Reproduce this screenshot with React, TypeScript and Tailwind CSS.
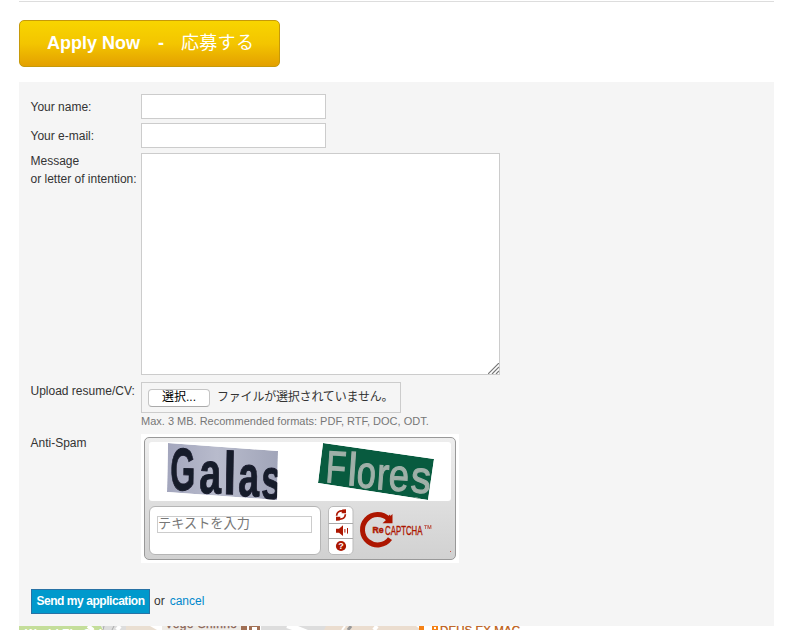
import React from 'react';

const field = 'border border-[#ccc] bg-white outline-none block';

type Glyph = { ch: string; x: number; y: number; size: number; w: number };

const galas: Glyph[] = [
  { ch: 'G', x: 170, y: 490, size: 60, w: 25 },
  { ch: 'a', x: 199, y: 493, size: 59, w: 22 },
  { ch: 'l', x: 223, y: 494, size: 60, w: 13 },
  { ch: 'a', x: 238, y: 496, size: 58, w: 21 },
  { ch: 's', x: 261, y: 499, size: 58, w: 20 },
];

const flores: Glyph[] = [
  { ch: 'F', x: 325, y: 482, size: 45, w: 20 },
  { ch: 'l', x: 347, y: 485, size: 46, w: 9 },
  { ch: 'o', x: 356, y: 487, size: 45, w: 19 },
  { ch: 'r', x: 376, y: 489, size: 45, w: 12 },
  { ch: 'e', x: 388, y: 490, size: 45, w: 20 },
  { ch: 's', x: 410, y: 492, size: 45, w: 20 },
];

function Glyphs({ items, tilt }: { items: Glyph[]; tilt: number }) {
  return (
    <>
      {items.map((g, i) => (
        <text key={i} x={g.x} y={g.y} fontSize={g.size} textLength={g.w} lengthAdjust="spacingAndGlyphs" transform={`rotate(${tilt} ${g.x} ${g.y})`}>
          {g.ch}
        </text>
      ))}
    </>
  );
}

function WordImages() {
  return (
    <svg width="302" height="59" viewBox="149 442 302 59" className="block rounded-[3px] bg-white">
      <defs>
        <linearGradient id="plate" x1="0" x2="1">
          <stop offset="0" stopColor="#a3a6bd" />
          <stop offset=".45" stopColor="#b8bbcc" />
          <stop offset="1" stopColor="#a1a5b9" />
        </linearGradient>
        <clipPath id="plateClip">
          <path d="M168 443 278 451 277 500 167 492Z" />
        </clipPath>
        <clipPath id="signClip">
          <path d="M323 443 434 459 428 500 318 483Z" />
        </clipPath>
        <filter id="soft"><feGaussianBlur stdDeviation=".55" /></filter>
      </defs>
      <g clipPath="url(#plateClip)">
        <path d="M168 443 278 451 277 500 167 492Z" fill="url(#plate)" />
        <g filter="url(#soft)" fill="#191b2b" stroke="#191b2b" strokeWidth="1" fontFamily="'Liberation Sans', Arial, sans-serif" fontWeight="700">
          <Glyphs items={galas} tilt={1} />
        </g>
      </g>
      <g clipPath="url(#signClip)">
        <path d="M323 443 434 459 428 500 318 483Z" fill="#085b3f" />
        <g filter="url(#soft)" fill="#9fb0a8" stroke="#9fb0a8" strokeWidth="1.2" fontFamily="'Liberation Sans', Arial, sans-serif">
          <Glyphs items={flores} tilt={4} />
        </g>
        <circle cx="416" cy="500" r="3" fill="#6e9584" />
      </g>
    </svg>
  );
}

function CaptchaButtons() {
  return (
    <svg width="26" height="50" viewBox="0 0 26 50" className="ml-[7px] block shrink-0">
      <rect x=".5" y=".5" width="24.5" height="48" rx="4.5" fill="#fff" stroke="#bbb" />
      <path d="M.5 17.5h24.5M.5 32.5h24.5" stroke="#aaa" />
      <g fill="none" stroke="#ad1600" strokeWidth="1.7">
        <path d="M8.6 9.8C8.8 6.2 11.2 4.7 14.8 5M17.4 8.2C17.2 11.8 14.8 13.3 11.2 13" />
      </g>
      <path d="M14.2 3.6 18 3.2V7.2H13.6ZM11.8 14.4 8 14.8V10.8H12.4Z" fill="#ad1600" />
      <path d="M8 22.7h3L15 19.3v10.6L11 26.7H8Z" fill="#ad1600" />
      <path d="M16.9 23v3.6M19.5 22v5.6" stroke="#ad1600" strokeWidth="1" />
      <circle cx="13" cy="40" r="5.1" fill="#ad1600" />
      <text x="13" y="43.2" textAnchor="middle" fontFamily="'Liberation Sans', Arial, sans-serif" fontWeight="700" fontSize="9" fill="#fff">?</text>
    </svg>
  );
}

function CaptchaLogo() {
  return (
    <svg width="98" height="50" viewBox="355 506 98 50" className="ml-px block shrink-0">
      <path d="M390 538.6A15.2 15.2 0 1 1 388.5 519" fill="none" stroke="#ad1600" strokeWidth="5" />
      <path d="M392.5 514V523.3H382.5Z" fill="#ad1600" />
      <path d="M385 519 390 514.5 392 523Z" fill="#ad1600" />
      <g fill="#ad1600" fontFamily="'Liberation Sans', Arial, sans-serif">
        <text x="372.5" y="533.2" fontSize="9" fontWeight="700" stroke="#ad1600" strokeWidth=".5" textLength="11" lengthAdjust="spacingAndGlyphs">Re</text>
        <text x="385" y="534.6" fontSize="13" stroke="#ad1600" strokeWidth=".35" textLength="37.5" lengthAdjust="spacingAndGlyphs">CAPTCHA</text>
        <text x="424" y="529" fontSize="5" stroke="#ad1600" strokeWidth=".2" opacity=".75" textLength="7.5" lengthAdjust="spacingAndGlyphs">TM</text>
      </g>
      <rect x="450" y="551" width="1" height="1" fill="#c65a4c" />
    </svg>
  );
}

function MapStrip() {
  return (
    <svg width="772" height="4" viewBox="19 626 772 4" className="ml-[19px] block">
      <path d="M19 626H101L103 630H19Z" fill="#c4de9a" />
      <path d="M101 626h25v4h-22Z" fill="#ddd" />
      <path d="M126 626h24l7 4h-31Z" fill="#eadfd2" />
      <path d="M162 626h80v4h-80Z" fill="#eeebe6" />
      <path d="M261 626h26l9 4h-35ZM298 626h31l-3 4h-18Z" fill="#ddd" />
      <path d="M326 626h90l5 4h-97Z" fill="#ebddcf" />
      <path d="m88 626 5 4M120 626l-3 4M287 626l11 4M377 626l-3 4" stroke="#fff" strokeWidth="4" />
      <path d="m345 626-3 4" stroke="#fff" strokeWidth="2" />
      <path d="m104 626-1 4M114 626l-2 4" stroke="#aaa" strokeWidth="1" />
      <path d="m351 626-3 4" stroke="#999" strokeWidth="3" />
      <g fontFamily="'Liberation Sans', Arial, sans-serif">
        <text x="25" y="638" fontSize="12" fill="#fff" fontWeight="700">World Fla Chi</text>
        <text x="165" y="627.8" fontSize="12" fill="#8b6558" stroke="#8b6558" strokeWidth=".3" textLength="72">Vege Shinho</text>
        <text x="440" y="634" fontSize="11.5" fill="#bd5c13" stroke="#bd5c13" strokeWidth=".3" textLength="80">DEUS EX MAC</text>
      </g>
      <path d="M241 626h6v4h-6ZM249 626h11v4h-11Z" fill="#a17055" />
      <path d="M252 627h5v3h-5Z" fill="#fff" />
      <path d="M419 626h5v4h-5ZM432 626h6v4h-6Z" fill="#f58216" />
      <path d="M434 627h2v2h-2Z" fill="#fff" />
    </svg>
  );
}

export default function App() {
  return (
    <div className="h-[630px] w-[791px] overflow-hidden bg-white font-['Liberation_Sans','Noto_Sans_CJK_JP',sans-serif] text-[12px] leading-[18px] text-[#333]">
      <div className="mx-[19px] mt-px h-px w-[755px] bg-[#ddd]" />
      <button className="ml-[19px] mt-[18px] flex h-[47px] w-[261px] items-center rounded-[5px] border border-[#c69a09] bg-linear-to-b from-[#f8d500] via-[#f3c500] to-[#e3a000] pb-px pl-[27px] text-[18px] font-bold text-white">
        <span className="w-[93px] whitespace-nowrap text-left">Apply Now</span>
        <span className="ml-[18px] w-[6px]">-</span>
        <span className="-mt-px ml-[17px] whitespace-nowrap font-normal tracking-[0.3px]">応募する</span>
      </button>

      <form className="ml-[19px] mt-[15px] h-[544px] w-[755px] bg-[#f5f5f5] pl-[11px] pt-[12px]">
        <div className="flex h-[29px]">
          <label className="w-[111px] pl-[0.5px] pt-[4px]">Your name:</label>
          <input className={`${field} h-[25px] w-[185px]`} />
        </div>
        <div className="flex h-[30px]">
          <label className="w-[111px] pl-[0.5px] pt-[4px]">Your e-mail:</label>
          <input className={`${field} h-[25px] w-[185px]`} />
        </div>
        <div className="flex h-[229px]">
          <label className="w-[111px] whitespace-nowrap pl-[0.5px]">
            <span className="-mt-px block">Message</span>
            <span className="block">or letter of intention:</span>
          </label>
          <div className={`${field} flex h-[222px] w-[359px] items-end justify-end`}>
            <svg width="11" height="11" viewBox="0 0 11 11">
              <path d="M0 11 11 0M4 11l7-7M8 11l3-3" stroke="#777" strokeWidth="1.2" />
            </svg>
          </div>
        </div>
        <div className="flex h-[52px]">
          <label className="w-[111px] pl-[0.5px]">Upload resume/CV:</label>
          <div>
            <div className="flex h-[31px] w-[260px] items-center border border-[#ccc] pl-[6px]">
              <button type="button" className="h-[18px] w-[62px] rounded-[4px] border border-[#c5c5c5] border-b-[#aaa] bg-white text-[12px] leading-[15px] text-black">選択...</button>
              <span className="-mt-[2px] ml-[7px] whitespace-nowrap text-[12px] tracking-[-0.2px]">ファイルが選択されていません。</span>
            </div>
            <p className="whitespace-nowrap text-[11px] leading-[17px] text-[#777]">Max. 3 MB. Recommended formats: PDF, RTF, DOC, ODT.</p>
          </div>
        </div>
        <div className="flex h-[155px]">
          <label className="w-[111px] pl-[0.5px]">Anti-Spam</label>
          <div className="h-[129px] w-[318px] bg-white p-[3px]">
            <div className="h-[123px] w-[312px] rounded-[5px] border border-[#999] bg-linear-to-b from-[#eee] to-[#d1d1d1] pl-[4px] pt-[4px]">
              <WordImages />
              <div className="mt-[5px] flex">
                <div className="h-[49px] w-[172px] shrink-0 rounded-[6px] border border-[#b5b5b5] bg-white pl-[7px] pt-[9px]">
                  <input placeholder="テキストを入力" className="block h-[17px] w-[155px] border border-[#ccc] p-0 pb-[3px] text-[13.2px] leading-[13px] outline-none placeholder:text-[#777]" />
                </div>
                <CaptchaButtons />
                <CaptchaLogo />
              </div>
            </div>
          </div>
        </div>
        <div className="flex items-start pl-px">
          <button type="button" className="h-[25px] w-[119px] whitespace-nowrap border border-[#2872a5] bg-[#0099cc] pb-[2px] text-[12px] font-bold tracking-[-0.45px] text-white">Send my application</button>
          <span className="ml-[4px] mt-[3px]">or</span>
          <a className="ml-[5px] mt-[3px] text-[#0088cc]">cancel</a>
        </div>
      </form>
      <MapStrip />
    </div>
  );
}
